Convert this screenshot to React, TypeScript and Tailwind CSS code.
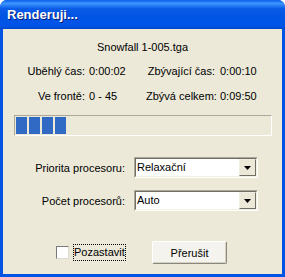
import React from 'react';

const font = { fontFamily: '"Liberation Sans", Arial, sans-serif' };

function Combo({ value }: { value: string }) {
  return (
    <div className="w-[124px] h-[21px] border-t border-l border-[#ACA899] border-b-white border-r-white border-b border-r">
      <div className="h-full flex border-t border-l border-[#716F64] border-b border-r border-b-[#F1EFE2] border-r-[#F1EFE2] bg-white">
        <span className="flex-1 pl-[1px] text-[11px] leading-[17px] text-black">{value}</span>
        <div className="w-[17px] h-[17px] bg-[#ECE9D8] border-t border-l border-[#F1EFE2] border-b border-r border-b-[#716F64] border-r-[#716F64] flex items-center justify-center">
          <svg width="7" height="4" viewBox="0 0 7 4">
            <path d="M0 0h7L3.5 4z" fill="#000" />
          </svg>
        </div>
      </div>
    </div>
  );
}

export default function App() {
  return (
    <div
      className="w-[285px] h-[277px] flex flex-col rounded-t-[7px] bg-[#0054E3] overflow-hidden"
      style={font}
    >
      {/* titulek */}
      <div className="h-[29px] shrink-0 flex items-center pl-[7px] pt-[1px] bg-[linear-gradient(to_bottom,#0A5FE8_0%,#3D95FF_12%,#0A5BE6_30%,#0054E3_60%,#0055EA_90%,#0046C4_100%)]">
        <span className="text-white font-bold text-[13px] [text-shadow:1px_1px_0_#0A1E7A]">Renderuji...</span>
      </div>

      <div className="flex-1 mx-[3px] mb-[3px] bg-[#ECE9D8] flex flex-col text-[11px] text-black leading-[14px] whitespace-nowrap">
        <div className="pt-[11px] text-center">Snowfall 1-005.tga</div>

        <div className="mt-[10px] flex">
          <span className="w-[82px] text-right">Uběhlý čas:</span>
          <span className="w-[61px] pl-[4px]">0:00:02</span>
          <span className="w-[69px] text-right">Zbývající čas:</span>
          <span className="pl-[5px]">0:00:10</span>
        </div>

        <div className="mt-[11px] flex">
          <span className="w-[82px] text-right">Ve frontě:</span>
          <span className="w-[61px] pl-[4px]">0 - 45</span>
          <span className="w-[69px] text-right">Zbývá celkem:</span>
          <span className="pl-[5px]">0:09:50</span>
        </div>

        {/* progress */}
        <div className="mt-[12px] ml-[11px] w-[258px] h-[21px] border-t border-l border-[#ACA899] border-b border-r border-b-white border-r-white flex gap-[2px] p-[1px]">
          <div className="w-[11px] h-[17px] bg-[#316AC5]" />
          <div className="w-[11px] h-[17px] bg-[#316AC5]" />
          <div className="w-[11px] h-[17px] bg-[#316AC5]" />
          <div className="w-[11px] h-[17px] bg-[#316AC5]" />
        </div>

        <div className="mt-[21px] flex items-center">
          <span className="w-[122px] text-right">Priorita procesoru:</span>
          <div className="ml-[9px]">
            <Combo value="Relaxační" />
          </div>
        </div>

        <div className="mt-[12px] flex items-center">
          <span className="w-[122px] text-right">Počet procesorů:</span>
          <div className="ml-[9px]">
            <Combo value="Auto" />
          </div>
        </div>

        <div className="mt-[30px] flex items-center">
          <div className="ml-[53px] w-[13px] h-[13px] bg-white border border-[#7A7A7A] border-b-[#DCDAD0] border-r-[#DCDAD0]" />
          <span className="ml-[4px] w-[53px] h-[17px] leading-[15px] border border-dotted border-black">Pozastavit</span>
          <button className="ml-[26px] w-[75px] h-[23px] bg-[#F4F3EE] border border-[#8A887E] border-t-white border-l-white rounded-[2px] shadow-[inset_-1px_-1px_0_#D6D2C2] text-[11px] text-black">
            Přerušit
          </button>
        </div>
      </div>
    </div>
  );
}
